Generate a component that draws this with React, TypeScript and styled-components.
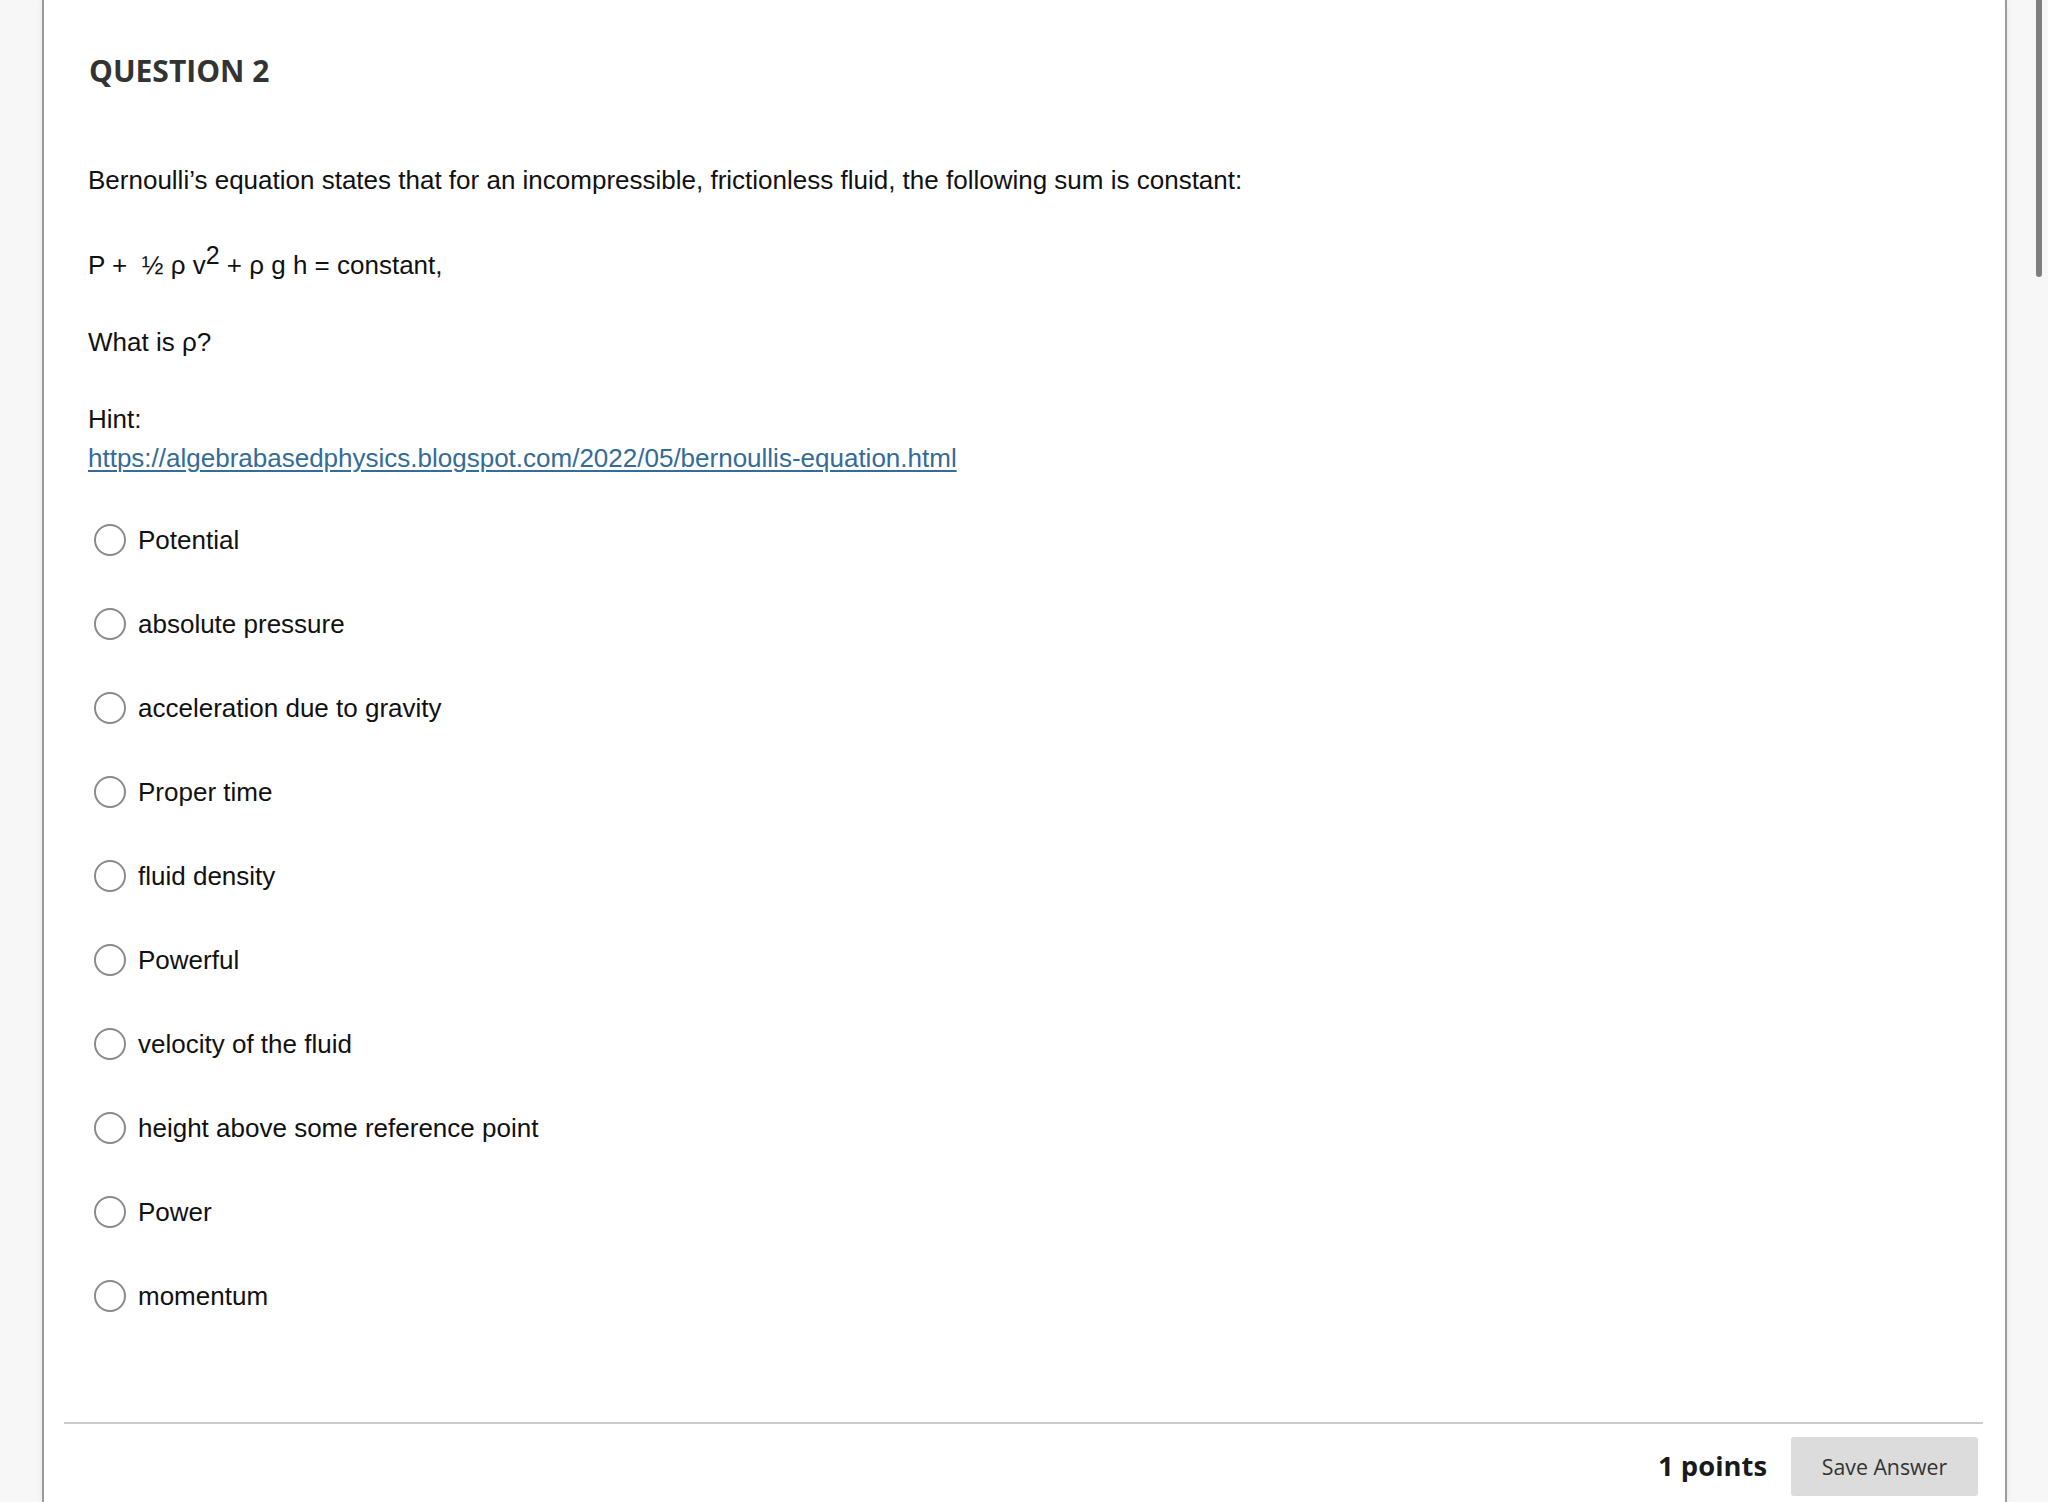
import React, { useState } from 'react';
import styled, { createGlobalStyle } from 'styled-components';

const options = [
  'Potential',
  'absolute pressure',
  'acceleration due to gravity',
  'Proper time',
  'fluid density',
  'Powerful',
  'velocity of the fluid',
  'height above some reference point',
  'Power',
  'momentum',
];

const GlobalStyle = createGlobalStyle`
  html, body {
    margin: 0;
    padding: 0;
    background: #f7f7f7;
    overflow: hidden;
  }
`;

const Page = styled.div`
  display: flex;
  height: 1502px;
  padding-left: 42px;
`;

const Panel = styled.div`
  width: 1961px;
  background: #fff;
  border-left: 2px solid #9b9b9b;
  border-right: 2px solid #9b9b9b;
  box-shadow: 0 0 6px rgba(0, 0, 0, 0.08);
  display: flex;
  flex-direction: column;
`;

const Content = styled.div`
  padding: 51px 44px 0 44px;
  font-family: 'Liberation Sans', Arial, sans-serif;
  font-size: 26px;
  line-height: 38.5px;
  color: #111;
`;

const Heading = styled.h2`
  margin: 0 0 69.5px 1px;
  font-family: 'Open Sans', sans-serif;
  font-weight: 700;
  font-size: 30px;
  line-height: 40px;
  color: #333;
`;

const Para = styled.p<{ $gap?: number }>`
  margin: 0 0 ${(p) => (p.$gap ?? 38.5)}px 0;
`;

const Equation = styled(Para)`
  padding-top: 5.5px;
`;

const Sup = styled.span`
  font-size: 25px;
  line-height: 1;
  vertical-align: 10px;
`;

const Link = styled.a`
  color: #336b99;
  text-decoration: underline;
  text-underline-offset: 3px;
  text-decoration-thickness: 1.5px;
`;

const OptionList = styled.div`
  margin-top: 43.5px;
  display: flex;
  flex-direction: column;
  gap: 45.5px;
`;

const OptionRow = styled.label`
  display: flex;
  align-items: center;
  height: 38.5px;
  cursor: pointer;
`;

const Radio = styled.span<{ $checked: boolean }>`
  box-sizing: border-box;
  width: 32px;
  height: 32px;
  margin-left: 6px;
  margin-right: 12px;
  border-radius: 50%;
  border: 2.5px solid #8a8a8a;
  background: #fff;
  display: flex;
  align-items: center;
  justify-content: center;

  &::after {
    content: '';
    width: 16px;
    height: 16px;
    border-radius: 50%;
    background: ${(p) => (p.$checked ? '#555' : 'transparent')};
  }
`;

const Footer = styled.div`
  margin: 107px 22px 0 20px;
  border-top: 2px solid #cbcbcb;
  padding-top: 13px;
  display: flex;
  justify-content: flex-end;
  align-items: center;
  gap: 24px;
  padding-right: 5px;
`;

const Points = styled.span`
  font-family: 'Open Sans', sans-serif;
  font-weight: 700;
  font-size: 27.4px;
  color: #1a1a1a;
  margin-top: -2px;
`;

const SaveButton = styled.button`
  width: 187px;
  height: 59px;
  border: none;
  border-radius: 3px;
  background: #dcdcdc;
  font-family: 'Open Sans', sans-serif;
  font-size: 21.3px;
  color: #333;
  cursor: pointer;
`;

const ScrollThumb = styled.div`
  position: fixed;
  top: 0;
  right: 6px;
  width: 6px;
  height: 277px;
  border-radius: 0 0 3px 3px;
  background: #7f7f7f;
`;

const App: React.FC = () => {
  const [selected, setSelected] = useState<number | null>(null);

  return (
    <>
      <GlobalStyle />
      <Page>
        <Panel>
          <Content>
            <Heading>QUESTION 2</Heading>
            <Para>
              Bernoulli’s equation states that for an incompressible, frictionless fluid, the
              following sum is constant:
            </Para>
            <Equation>
              P +&nbsp; ½ ρ v<Sup>2</Sup> + ρ g h = constant,
            </Equation>
            <Para>What is ρ?</Para>
            <Para $gap={0}>
              Hint:
              <br />
              <Link href="#">https://algebrabasedphysics.blogspot.com/2022/05/bernoullis-equation.html</Link>
            </Para>
            <OptionList>
              {options.map((label, i) => (
                <OptionRow key={label} onClick={() => setSelected(i)}>
                  <Radio $checked={selected === i} />
                  {label}
                </OptionRow>
              ))}
            </OptionList>
          </Content>
          <Footer>
            <Points>1 points</Points>
            <SaveButton>Save Answer</SaveButton>
          </Footer>
        </Panel>
      </Page>
      <ScrollThumb />
    </>
  );
};

export default App;
